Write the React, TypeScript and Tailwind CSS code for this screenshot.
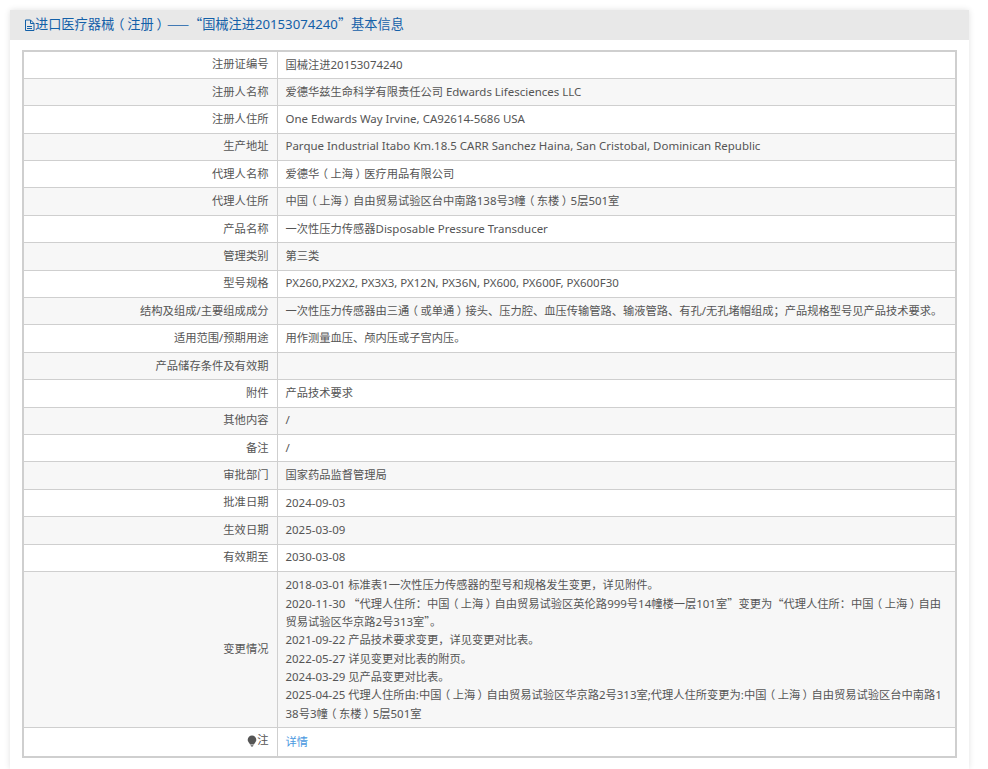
import { Fragment } from 'react';

const rows: [string, string][] = [
  ['注册证编号', '国械注进20153074240'],
  ['注册人名称', '爱德华兹生命科学有限责任公司 Edwards Lifesciences LLC'],
  ['注册人住所', 'One Edwards Way Irvine, CA92614-5686 USA'],
  ['生产地址', 'Parque Industrial Itabo Km.18.5 CARR Sanchez Haina, San Cristobal, Dominican Republic'],
  ['代理人名称', '爱德华（上海）医疗用品有限公司'],
  ['代理人住所', '中国（上海）自由贸易试验区台中南路138号3幢（东楼）5层501室'],
  ['产品名称', '一次性压力传感器Disposable Pressure Transducer'],
  ['管理类别', '第三类'],
  ['型号规格', 'PX260,PX2X2, PX3X3, PX12N, PX36N, PX600, PX600F, PX600F30'],
  ['结构及组成/主要组成成分', '一次性压力传感器由三通（或单通）接头、压力腔、血压传输管路、输液管路、有孔/无孔堵帽组成；产品规格型号见产品技术要求。'],
  ['适用范围/预期用途', '用作测量血压、颅内压或子宫内压。'],
  ['产品储存条件及有效期', ''],
  ['附件', '产品技术要求'],
  ['其他内容', '/'],
  ['备注', '/'],
  ['审批部门', '国家药品监督管理局'],
  ['批准日期', '2024-09-03'],
  ['生效日期', '2025-03-09'],
  ['有效期至', '2030-03-08'],
];

const changes = [
  '2018-03-01 标准表1一次性压力传感器的型号和规格发生变更，详见附件。',
  '2020-11-30 “代理人住所：中国（上海）自由贸易试验区英伦路999号14幢楼一层101室”变更为“代理人住所：中国（上海）自由贸易试验区华京路2号313室”。',
  '2021-09-22 产品技术要求变更，详见变更对比表。',
  '2022-05-27 详见变更对比表的附页。',
  '2024-03-29 见产品变更对比表。',
  '2025-04-25 代理人住所由:中国（上海）自由贸易试验区华京路2号313室;代理人住所变更为:中国（上海）自由贸易试验区台中南路138号3幢（东楼）5层501室',
];

const labelCls = 'border border-[#cfcfcf] px-2 text-right font-normal align-middle';
const valueCls = 'border border-[#cfcfcf] pl-2 text-left align-middle text-[11.25px]';

// full-width brackets sit centred in their box in the reference, quotes and dashes are the CJK ones
function Cn({ text, plain }: { text: string; plain?: boolean }) {
  return (
    <>
      {text.split(/([（）]|[“”—]+|[\x21-\x7e]+(?: [\x21-\x7e]+)*)/).map((part, i) => {
        if (part === '（' || part === '）') {
          return (
            <span key={i} className="inline-block w-[1em] text-center leading-none font-['Noto_Sans_CJK_SC',sans-serif] [font-feature-settings:'palt']">
              {part}
            </span>
          );
        }
        if (/^[“”—]+$/.test(part)) {
          return <span key={i} className="leading-none font-['Noto_Sans_CJK_SC',sans-serif]">{part}</span>;
        }
        if (/^[\x21-\x7e]/.test(part)) {
          return <span key={i} className={plain ? 'leading-none' : 'text-[1.02em] leading-none'}>{part}</span>;
        }
        return <Fragment key={i}>{part}</Fragment>;
      })}
    </>
  );
}

export default function App() {
  return (
    <div className="min-h-[769px] bg-white pt-2.5 pl-2.5 pr-[19px] font-['Noto_Sans','Noto_Sans_CJK_SC',sans-serif] text-[11.3px] text-[#555]">
      <div className="bg-white shadow-[0_0_6px_rgba(0,0,0,0.12)] pb-[11px]">
        <div className="flex h-[30px] items-center bg-[#e8e8e8] pl-[14px] text-[13.2px] text-[#1360a8]">
          <svg width="11" height="13" viewBox="0 0 11 13" fill="none" stroke="currentColor" strokeWidth="1" className="shrink-0">
            <path d="M1.500 1h5l3.500 3.500v7h-8.500z M6.500 1v3.500h3.500 M3 7.500h5 M3 9.500h5" />
          </svg>
          <span><Cn plain text="进口医疗器械（注册）——“国械注进20153074240”基本信息" /></span>
        </div>
        <div className="px-3 pt-2.5">
          <table className="w-full table-fixed border-collapse border-2 border-[#cfcfcf]">
            <colgroup>
              <col className="w-[254px]" />
              <col />
            </colgroup>
            <tbody>
              {rows.map(([label, value], i) => (
                <tr key={label} className={`h-[27.4px] ${i % 2 === 1 ? 'bg-[#f7f7f7]' : 'bg-white'}`}>
                  <th className={labelCls}>{label}</th>
                  <td className={`${valueCls} pr-2`}><Cn text={value} /></td>
                </tr>
              ))}
              <tr className="bg-[#f7f7f7]">
                <th className={labelCls}>变更情况</th>
                <td className={`${valueCls} py-[4.5px] pr-3 leading-[18.3px] break-all`}>
                  {changes.map((c) => (
                    <div key={c}><Cn text={c} /></div>
                  ))}
                </td>
              </tr>
              <tr className="h-[29px] bg-white">
                <th className={labelCls}>
                  <span className="inline-flex items-center justify-end">
                    <svg width="10" height="12" viewBox="0 0 10 12" fill="#555" className="shrink-0">
                      <path d="M5 .5a4.300 4.300 0 0 1 4.300 4.300c0 1.700-1.100 2.700-1.800 3.600-.4.500-.5.900-.6 1.100H3.100c-.1-.2-.2-.6-.6-1.100C1.800 7.500.7 6.500.7 4.800A4.300 4.300 0 0 1 5 .5zM3.500 10.200h3l-.6 1.300H4.100z" />
                    </svg>
                    注
                  </span>
                </th>
                <td className={`${valueCls} pr-2 text-[#4a98e0]`}>详情</td>
              </tr>
            </tbody>
          </table>
        </div>
      </div>
    </div>
  );
}
